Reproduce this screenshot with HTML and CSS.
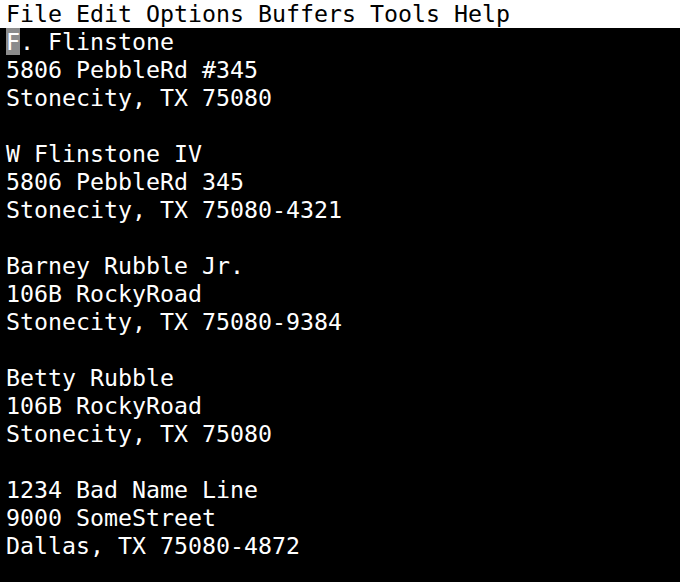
FILE: index.html
```html
<!DOCTYPE html>
<html>
<head>
<meta charset="utf-8">
<link rel="stylesheet" href="styles.css">
</head>
<body>
<div class="menubar">File Edit Options Buffers Tools Help</div>
<pre class="buffer"><span class="cursor">F</span>. Flinstone
5806 PebbleRd #345
Stonecity, TX 75080

W Flinstone IV
5806 PebbleRd 345
Stonecity, TX 75080-4321

Barney Rubble Jr.
106B RockyRoad
Stonecity, TX 75080-9384

Betty Rubble
106B RockyRoad
Stonecity, TX 75080

1234 Bad Name Line
9000 SomeStreet
Dallas, TX 75080-4872</pre>
</body>
</html>
```
FILE: styles.css
```css
html, body {
  margin: 0;
  padding: 0;
  background: #000;
  height: 100%;
  overflow: hidden;
}
.menubar, .buffer {
  font-family: "DejaVu Sans Mono", monospace;
  font-size: 23.25px;
  line-height: 28px;
  white-space: pre;
}
.menubar {
  background: #fff;
  color: #000;
  height: 28px;
  padding-left: 6px;
}
.buffer {
  margin: 0;
  padding-left: 6px;
  color: #fff;
}
.cursor {
  background: #8c8c8c;
}
```
